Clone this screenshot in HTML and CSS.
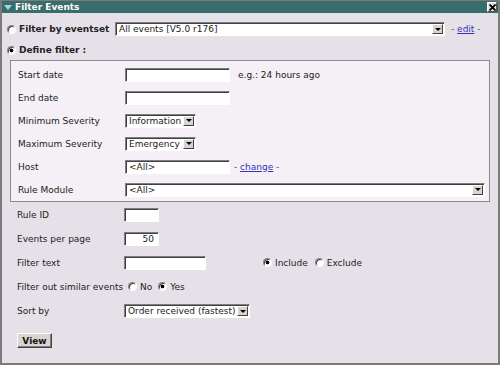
FILE: index.html
```html
<!DOCTYPE html>
<html lang="en">
<head>
  <meta charset="UTF-8" />
  <title>Filter Events</title>
  <link rel="stylesheet" href="styles.css">
</head>
<body>

<div class="window">

  <div class="titlebar">
    <span class="tri"></span>
    <span class="title">Filter Events</span>
    <span class="close">
      <svg width="7" height="7" viewBox="0 0 7 7"><path d="M0.5 0.5 L6.5 6.5 M6.5 0.5 L0.5 6.5" stroke="#000" stroke-width="1.8"/></svg>
    </span>
  </div>

  <div class="content">

    <div class="head">
      <label class="opt"><input type="radio" name="mode" /> Filter by eventset</label>
      <span class="sel w330">
        <select><option>All events [V5.0 r176]</option></select>
        <span class="arrow"></span>
      </span>
      <span class="links">- <a href="#">edit</a> -</span>
    </div>

    <div class="head define">
      <label class="opt"><input type="radio" name="mode" checked /> Define filter :</label>
    </div>

    <div class="box">
      <div class="row">
        <span class="lbl">Start date</span>
        <input type="text" class="txt w105" />
        <span class="hint">e.g.: 24 hours ago</span>
      </div>
      <div class="row">
        <span class="lbl">End date</span>
        <input type="text" class="txt w105" />
      </div>
      <div class="row">
        <span class="lbl">Minimum Severity</span>
        <span class="sel w71">
          <select><option>Information</option></select>
          <span class="arrow"></span>
        </span>
      </div>
      <div class="row">
        <span class="lbl">Maximum Severity</span>
        <span class="sel w71">
          <select><option>Emergency</option></select>
          <span class="arrow"></span>
        </span>
      </div>
      <div class="row">
        <span class="lbl">Host</span>
        <input type="text" class="txt w105" value="<All>" />
        <span class="links">- <a href="#">change</a> -</span>
      </div>
      <div class="row">
        <span class="lbl">Rule Module</span>
        <span class="sel w360">
          <select><option>&lt;All&gt;</option></select>
          <span class="arrow"></span>
        </span>
      </div>
    </div>

    <div class="outer">
      <div class="row">
        <span class="lbl">Rule ID</span>
        <input type="text" class="txt w35" />
      </div>
      <div class="row">
        <span class="lbl">Events per page</span>
        <input type="text" class="txt w35 num" value="50" />
      </div>
      <div class="row">
        <span class="lbl">Filter text</span>
        <input type="text" class="txt w82" />
        <span class="choices incl">
          <label><input type="radio" name="match" checked /> Include</label>
          <label><input type="radio" name="match" /> Exclude</label>
        </span>
      </div>
      <div class="row">
        <span class="lbl">Filter out similar events</span>
        <span class="choices similar">
          <label><input type="radio" name="similar" /> No</label>
          <label><input type="radio" name="similar" checked /> Yes</label>
        </span>
      </div>
      <div class="row">
        <span class="lbl">Sort by</span>
        <span class="sel w126">
          <select><option>Order received (fastest)</option></select>
          <span class="arrow"></span>
        </span>
      </div>
    </div>

    <div class="actions">
      <button class="view">View</button>
    </div>

  </div>
</div>

</body>
</html>
```

FILE: styles.css
```css
:root {
  --bg: #e6e1e8;
  --box: #f4f0f6;
  --title: #386d6b;
  --frame: #7b7b7b;
  --text: #222;
  --face: #d8d5d0;
}
* {
  box-sizing: border-box;
}
body {
  margin: 0;
  font-family: "DejaVu Sans", Verdana, sans-serif;
  font-size: 9px;
  color: var(--text);
}
.window {
  width: 500px;
  height: 365px;
  border: 2px solid var(--frame);
  border-top-width: 1px;
  background: var(--bg);
}
.titlebar {
  height: 12px;
  background: var(--title);
  color: #fff;
  font-weight: bold;
  display: flex;
  align-items: center;
  padding: 0 1px 0 2px;
}
.tri {
  width: 0;
  height: 0;
  border-left: 4px solid transparent;
  border-right: 4px solid transparent;
  border-top: 5px solid #a6d4ee;
  margin-right: 3px;
}
.title {
  flex: 1;
}
.close {
  width: 10px;
  height: 10px;
  background: #e2e2e2;
  border: 1px solid;
  border-color: #fff #555 #555 #fff;
  display: flex;
  align-items: center;
  justify-content: center;
}
.close svg {
  display: block;
}
.content {
  padding: 5px 8px 0 15px;
}
.head {
  display: flex;
  align-items: center;
  height: 22px;
  margin-left: -10px;
}
.head.define {
  height: 20px;
}
.opt {
  width: 108px;
  flex: none;
  display: flex;
  align-items: center;
  font-weight: bold;
  white-space: nowrap;
}
.links {
  margin-left: 6px;
  color: #555;
  white-space: nowrap;
}
.row .links {
  margin-left: 4px;
}
a {
  color: #3333bb;
  text-decoration: underline;
}
.box {
  margin-left: -7px;
  padding: 2px 0 0 7px;
  height: 142px;
  border: 1px solid #8a8a8a;
  background: var(--box);
}
.row {
  display: flex;
  align-items: center;
  height: 23px;
}
.outer {
  margin-top: 1px;
}
.outer .row {
  height: 24px;
}
.lbl {
  width: 107px;
  flex: none;
  white-space: nowrap;
}
.hint {
  margin-left: 8px;
}
.txt {
  height: 14px;
  border: 1px solid;
  border-color: #7f7f7f #fff #fff #7f7f7f;
  box-shadow: inset 1px 1px 0 #404040;
  background: #fff;
  font: inherit;
  color: var(--text);
  padding: 0 2px 0 3px;
  margin: 0;
  outline: none;
}
.num {
  text-align: right;
  padding-right: 4px;
}
.w35 { width: 35px; }
.w82 { width: 82px; }
.w105 { width: 105px; }
.sel {
  display: inline-flex;
  height: 14px;
  border: 1px solid;
  border-color: #7f7f7f #fff #fff #7f7f7f;
  box-shadow: inset 1px 1px 0 #404040;
  background: #fff;
}
.w71 { width: 71px; }
.w126 { width: 126px; }
.w330 { width: 330px; }
.w360 { width: 360px; }
.sel select {
  appearance: none;
  -webkit-appearance: none;
  flex: 1;
  min-width: 0;
  height: 100%;
  border: 0;
  background: transparent;
  font: inherit;
  color: var(--text);
  padding: 0 0 0 3px;
  margin: 0;
  outline: none;
}
.arrow {
  width: 11px;
  margin: 1px;
  flex: none;
  background: var(--face);
  border: 1px solid;
  border-color: #fff #404040 #404040 #fff;
  display: flex;
  align-items: center;
  justify-content: center;
}
.arrow::before {
  content: "";
  border-left: 3px solid transparent;
  border-right: 3px solid transparent;
  border-top: 3px solid #000;
}
input[type="radio"] {
  appearance: none;
  -webkit-appearance: none;
  width: 9px;
  height: 9px;
  margin: 0 3px 0 0;
  border-radius: 50%;
  border: 1px solid;
  border-color: #808080 #fff #fff #808080;
  box-shadow: inset 1px 1px 0 #404040;
  background: #fff;
  flex: none;
}
input[type="radio"]:checked {
  background: radial-gradient(circle, #000 0 1.6px, #fff 2.2px);
}
.choices {
  display: flex;
  align-items: center;
}
.choices label {
  display: flex;
  align-items: center;
}
.choices label input {
  margin-top: -2px;
}
.incl {
  margin-left: 57px;
}
.incl label + label {
  margin-left: 7px;
}
.similar {
  margin-left: 4px;
}
.similar label + label {
  margin-left: 6px;
}
.actions {
  margin-top: 10px;
}
.view {
  width: 35px;
  height: 15px;
  padding: 0;
  font: inherit;
  font-weight: bold;
  color: #111;
  background: var(--face);
  border: 1px solid;
  border-color: #fff #404040 #404040 #fff;
  box-shadow: inset -1px -1px 0 #808080;
}
```
